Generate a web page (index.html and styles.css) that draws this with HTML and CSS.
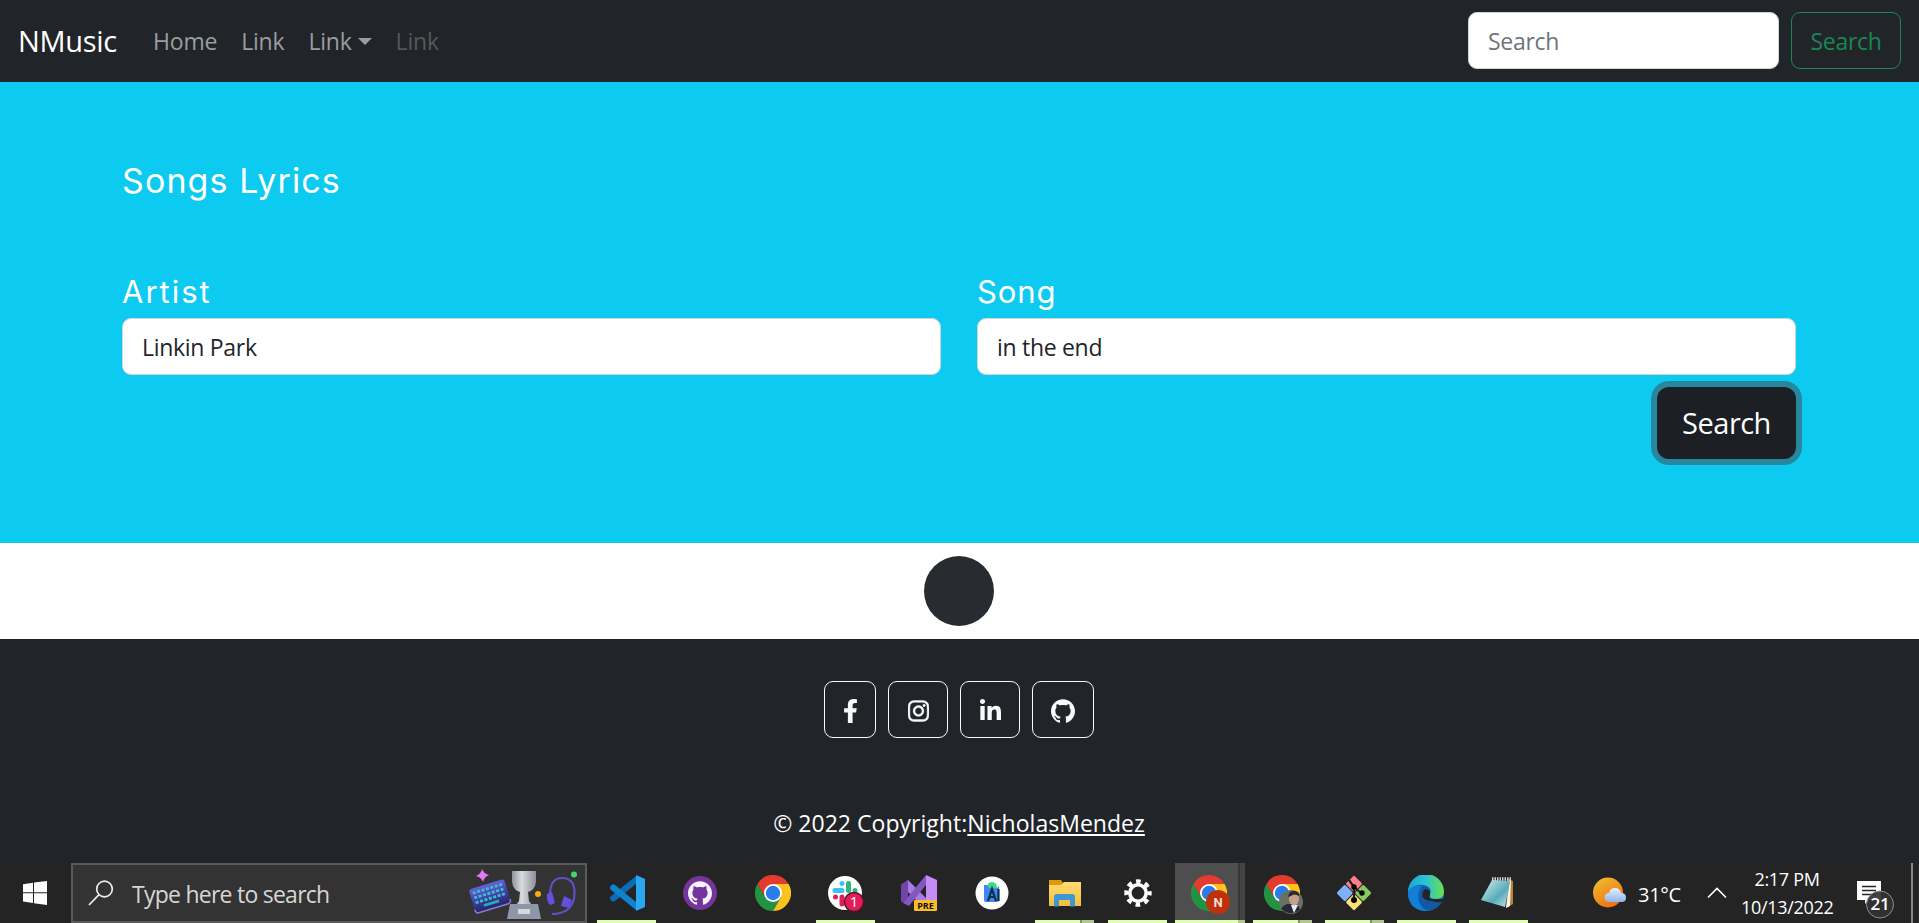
FILE: index.html
```html
<!DOCTYPE html>
<html lang="en">
<head>
<meta charset="utf-8">
<title>NMusic</title>
<link rel="stylesheet" href="styles.css">
</head>
<body>
<svg width="0" height="0" class="defs" aria-hidden="true">
  <defs>
    <symbol id="octocat" viewBox="0 0 24 24"><path d="M12 .297c-6.63 0-12 5.373-12 12 0 5.303 3.438 9.8 8.205 11.385.6.113.82-.258.82-.577 0-.285-.01-1.04-.015-2.04-3.338.724-4.042-1.61-4.042-1.61C4.422 18.07 3.633 17.7 3.633 17.7c-1.087-.744.084-.729.084-.729 1.205.084 1.838 1.236 1.838 1.236 1.07 1.835 2.809 1.305 3.495.998.108-.776.417-1.305.76-1.605-2.665-.3-5.466-1.332-5.466-5.93 0-1.31.465-2.38 1.235-3.22-.135-.303-.54-1.523.105-3.176 0 0 1.005-.322 3.3 1.23.96-.267 1.98-.399 3-.405 1.02.006 2.04.138 3 .405 2.28-1.552 3.285-1.23 3.285-1.23.645 1.653.24 2.873.12 3.176.765.84 1.23 1.91 1.23 3.22 0 4.61-2.805 5.625-5.475 5.92.42.36.81 1.096.81 2.22 0 1.606-.015 2.896-.015 3.286 0 .315.21.69.825.57C20.565 22.092 24 17.592 24 12.297c0-6.627-5.373-12-12-12"/></symbol>
    <symbol id="chrome" viewBox="0 0 36 36">
      <path d="M18 9h15.6A18 18 0 0 0 2.4 9l7.8 13.5z" fill="#e33b2e"/>
      <path d="M10.2 22.5 2.4 9A18 18 0 0 0 18 36l7.8-13.5z" fill="#229342"/>
      <path d="M25.8 22.5 18 36A18 18 0 0 0 33.6 9H18z" fill="#fcc31e"/>
      <circle cx="18" cy="18" r="9" fill="#fff"/><circle cx="18" cy="18" r="7.2" fill="#2a7de9"/>
    </symbol>
    <linearGradient id="sun" x1="0" y1="0" x2=".6" y2="1"><stop offset="0" stop-color="#ecc233"/><stop offset="1" stop-color="#f3710f"/></linearGradient>
    <linearGradient id="cloud" x1="0" y1="0" x2="0" y2="1"><stop offset="0" stop-color="#e6f0ff"/><stop offset="1" stop-color="#8fb4ee"/></linearGradient>
    <linearGradient id="cup"><stop offset="0" stop-color="#8f949b"/><stop offset=".4" stop-color="#d9dbde"/><stop offset="1" stop-color="#8b8f96"/></linearGradient>
    <linearGradient id="keys" x1="0" y1="0" x2="0" y2="1"><stop offset="0" stop-color="#6560d8"/><stop offset="1" stop-color="#27246e"/></linearGradient>
    <linearGradient id="edgeTop"><stop offset="0" stop-color="#1aa5dc"/><stop offset=".5" stop-color="#2cc4cf"/><stop offset="1" stop-color="#6bdf4e"/></linearGradient>
    <linearGradient id="pad" x1="0" y1="0" x2="1" y2="1"><stop offset="0" stop-color="#d6eef1"/><stop offset=".6" stop-color="#56acb9"/><stop offset="1" stop-color="#d4e9ec"/></linearGradient>
    <linearGradient id="folder" x1="0" y1="0" x2="0" y2="1"><stop offset="0" stop-color="#ffdc73"/><stop offset="1" stop-color="#f5bd3a"/></linearGradient>
  </defs>
</svg>

<nav class="navbar">
  <a class="brand">NMusic</a>
  <div class="nav-links">
    <a class="nav-link">Home</a>
    <a class="nav-link">Link</a>
    <a class="nav-link dropdown">Link</a>
    <a class="nav-link disabled">Link</a>
  </div>
  <form class="nav-search">
    <div class="control placeholder">Search</div>
    <div class="btn-outline-success">Search</div>
  </form>
</nav>

<main class="hero">
  <h1 class="title">Songs Lyrics</h1>
  <div class="fields">
    <div class="field"><h2 class="label wide">Artist</h2><div class="control">Linkin Park</div></div>
    <div class="field"><h2 class="label">Song</h2><div class="control">in the end</div></div>
  </div>
  <div class="actions"><div class="btn-dark">Search</div></div>
</main>

<section class="loading"><div class="spinner"></div></section>

<footer class="footer">
  <div class="social">
    <a class="social-btn fb"><svg viewBox="0 0 320 512" width="15" height="24"><path d="M279.14 288l14.22-92.66h-88.91v-60.13c0-25.35 12.42-50.06 52.24-50.06h40.42V6.26S260.43 0 225.36 0c-73.22 0-121.08 44.38-121.08 124.72v70.62H22.89V288h81.39v224h100.17V288z"/></svg></a>
    <a class="social-btn"><svg viewBox="0 0 448 512" width="21" height="24"><path stroke="#f8f9fa" stroke-width="10" d="M224.1 141c-63.6 0-114.9 51.3-114.9 114.9s51.3 114.9 114.9 114.9S339 319.5 339 255.9 287.7 141 224.1 141zm0 189.6c-41.1 0-74.7-33.5-74.7-74.7s33.5-74.7 74.7-74.7 74.7 33.5 74.7 74.7-33.6 74.7-74.7 74.7zm146.4-194.3c0 14.9-12 26.8-26.8 26.8-14.9 0-26.8-12-26.8-26.8s12-26.8 26.8-26.8 26.8 12 26.8 26.8zm76.1 27.2c-1.7-35.9-9.9-67.7-36.2-93.9-26.2-26.2-58-34.4-93.9-36.2-37-2.1-147.9-2.1-184.9 0-35.8 1.7-67.6 9.9-93.9 36.1s-34.4 58-36.2 93.9c-2.1 37-2.1 147.9 0 184.9 1.7 35.9 9.9 67.7 36.2 93.9s58 34.4 93.9 36.2c37 2.1 147.9 2.1 184.9 0 35.9-1.7 67.7-9.9 93.9-36.2 26.2-26.2 34.4-58 36.2-93.9 2.1-37 2.1-147.8 0-184.8zM398.8 388c-7.8 19.6-22.9 34.7-42.6 42.6-29.5 11.7-99.5 9-132.1 9s-102.7 2.6-132.1-9c-19.6-7.8-34.7-22.9-42.6-42.6-11.7-29.5-9-99.5-9-132.1s-2.6-102.7 9-132.1c7.8-19.6 22.9-34.7 42.6-42.6 29.5-11.7 99.5-9 132.1-9s102.7-2.6 132.1 9c19.6 7.8 34.7 22.9 42.6 42.6 11.7 29.5 9 99.5 9 132.1s2.7 102.7-9 132.1z"/></svg></a>
    <a class="social-btn"><svg viewBox="0 0 448 512" width="21" height="24"><path d="M100.28 448H7.4V148.9h92.88zM53.79 108.1C24.09 108.1 0 83.5 0 53.8a53.79 53.79 0 0 1 107.58 0c0 29.7-24.1 54.3-53.79 54.3zM447.9 448h-92.68V302.4c0-34.7-.7-79.2-48.29-79.2-48.29 0-55.69 37.7-55.69 76.7V448h-92.78V148.9h89.08v40.8h1.3c12.4-23.5 42.69-48.3 87.88-48.3 94 0 111.28 61.9 111.28 142.3V448z"/></svg></a>
    <a class="social-btn gh"><svg width="24" height="24"><use href="#octocat"/></svg></a>
  </div>
  <p class="copyright">© 2022 Copyright:<a class="author">NicholasMendez</a></p>
</footer>

<div class="taskbar">
  <div class="start"><svg width="24" height="24" viewBox="0 0 24 24" fill="#fff"><path d="M0 3.2 10 1.8V11.3H0zM11 1.6 24 0V11.3H11zM0 12.3H10V22L0 20.6zM11 12.3H24V24L11 22.2z"/></svg></div>
  <div class="task-search">
    <svg width="26" height="26" viewBox="0 0 26 26" fill="none" stroke="#eee" stroke-width="1.7"><circle cx="16.5" cy="9" r="7.8"/><path d="M11 14.7 1 25"/></svg>
    <span class="task-search-text">Type here to search</span>
    <svg class="art" width="110" height="54" viewBox="0 0 110 54">
      <path d="M15 3q2 5 7 6-5 2-6 7-2-5-7-6 5-2 6-7z" fill="#e07bf2"/>
      <g transform="rotate(-17 22 29)"><rect x="4" y="18" width="37" height="24" rx="3" fill="url(#keys)"/><path d="M4 39q0 4 3 4h31q3 0 3-4" fill="none" stroke="#8579d9" stroke-width="1.5"/>
      <path d="M7 22.500h31M7 27.500h31M7 32.500h31" stroke="#33c2d1" stroke-width="2.800" stroke-dasharray="3 1.600"/><path d="M14 37.500h16" stroke="#22adba" stroke-width="2.800"/></g>
      <path d="M45 5h24v11q-1 8-8 10l1 9 3 4H49l3-4 1-9q-7-2-8-10z" fill="url(#cup)"/><path d="M43 38h28l3 15H40z" fill="#8e97a7"/><rect x="51" y="43" width="12" height="5" fill="#d8d8db"/>
      <circle cx="71" cy="28" r="3" fill="#f8ab0b"/><circle cx="107" cy="8.500" r="3" fill="#45d56c"/>
      <path d="M83 29q0-17 12-17 15 0 12 21-4 15-22 15" fill="none" stroke="#5c51c6" stroke-width="2.200"/><path d="M80 28l5-2 3 11-4 2q-5-2-4-11zM97 30l8 4-3 8-8-2z" fill="#6250e0"/>
    </svg>
  </div>
  <div class="apps">
    <div class="app running"><svg width="36" height="36" viewBox="0 0 36 36"><path d="M1 24q2 4 5 2L27 9V1L1 22z" fill="#0a6cb4"/><path d="M1 12q2-4 5-2l21 17v8L1 14z" fill="#1183ce"/><path d="M27 0l9 4v28l-9 4z" fill="#2aa6f2"/></svg></div>
    <div class="app"><svg width="36" height="36" viewBox="0 0 36 36"><circle cx="18" cy="18" r="17" fill="#75349b"/><use href="#octocat" x="6" y="6" width="24" height="24" fill="#f6f2fb"/></svg></div>
    <div class="app"><svg width="36" height="36"><use href="#chrome"/></svg></div>
    <div class="app running"><svg width="38" height="38" viewBox="0 0 38 38"><circle cx="18" cy="18" r="17" fill="#fff"/><path d="M8 15.500h7M15 8.500h0" stroke="#36c5f0" stroke-width="5" stroke-linecap="round"/><path d="M21.500 8.500v7M28 15.500h0" stroke="#2eb67d" stroke-width="5" stroke-linecap="round"/><path d="M15 22v7M8.500 22h0" stroke="#e01e5a" stroke-width="5" stroke-linecap="round"/><circle cx="27" cy="27" r="9.500" fill="#e01e5a" stroke="#5d1029" stroke-width="1.500"/><text x="27" y="32" text-anchor="middle" class="badge-one">1</text></svg></div>
    <div class="app"><svg width="36" height="36" viewBox="0 0 36 36"><path d="M0 10l7-5 22 22-3 9z" fill="#a77be6"/><path d="M0 10l7-5v18l-5 5-2-2z" fill="#7144a8"/><path d="M2 28 25 0v10L8 31z" fill="#8257be"/><path d="M25 0l11 5v26H25z" fill="#c48df5"/><rect x="13" y="25" width="23" height="11" rx="1" fill="#fbbc2a"/><text x="24.500" y="33.500" text-anchor="middle" class="badge-pre">PRE</text></svg></div>
    <div class="app"><svg width="36" height="36" viewBox="0 0 36 36"><circle cx="18" cy="18" r="16.500" fill="#fff"/><path d="M13 13q0-6 5-6t5 6z" fill="#3ddc84"/><path d="M10 10h3l2 3h8l2-2v14q0 2-2 2H12q-2 0-2-2z" fill="#4285f4"/><path d="M14 26l4-12 4 12M15.500 22h5M24.500 14v12" fill="none" stroke="#073042" stroke-width="2.200"/></svg></div>
    <div class="app running stacked"><svg width="36" height="36" viewBox="0 0 36 36"><path d="M2 5h12l2 3v5H2z" fill="#e0980a"/><path d="M2 10h12l3-3h17v24H2z" fill="url(#folder)"/><path d="M7 31.500V22q0-3 3-3h15q3 0 3 3v9.500h-5V25H12v6.500z" fill="#3d97d5"/></svg></div>
    <div class="app running"><svg width="36" height="36" viewBox="0 0 36 36" fill="none" stroke="#fff"><circle cx="18" cy="18" r="8.200" stroke-width="3.600"/><circle cx="18" cy="18" r="11.500" stroke-width="4.400" stroke-dasharray="4.600 4.432" stroke-dashoffset="2.300"/></svg></div>
    <div class="app active"><svg width="40" height="40" viewBox="0 0 40 40"><use href="#chrome" width="36" height="36"/><circle cx="27" cy="27" r="12" fill="#be310c"/><text x="27" y="32" text-anchor="middle" class="badge-n">N</text></svg></div>
    <div class="app narrow running stacked"><svg class="profile" width="40" height="40" viewBox="0 0 40 40"><use href="#chrome" width="36" height="36"/><circle cx="27" cy="27" r="12" fill="#6a7160"/><path d="M17 34q3-5 8-5h6q4 1 5 6-9 7-19-1z" fill="#24283a"/><path d="M27 30l3 8 4-8z" fill="#e9edf2"/><ellipse cx="30" cy="24" rx="5" ry="6.500" fill="#c7a08d"/><path d="M24 22q1-7 7-6 5 1 4 5-5-3-8 0z" fill="#2f2724"/></svg></div>
    <div class="app narrow running stacked"><svg width="36" height="36" viewBox="0 0 36 36"><g transform="rotate(45 18 18)"><rect x="5.500" y="5.500" width="12" height="12" rx="1.500" fill="#fb7f84"/><rect x="18.500" y="5.500" width="12" height="12" rx="1.500" fill="#84cd5c"/><rect x="5.500" y="18.500" width="12" height="12" rx="1.500" fill="#7fb0fb"/><rect x="18.500" y="18.500" width="12" height="12" rx="1.500" fill="#fde077"/></g><path d="M13 5l5 7v13M18 12l7 6" stroke="#211f20" stroke-width="2.200" fill="none"/><circle cx="18" cy="12" r="2.700"/><circle cx="18" cy="25" r="3"/><circle cx="26" cy="18" r="2.700"/></svg></div>
    <div class="app narrow running"><svg width="36" height="36" viewBox="0 0 36 36"><circle cx="18" cy="18" r="18" fill="#0f6cbd"/><path d="M0 17A18 18 0 0 1 36 17q0 7-8 7-7 0-6-4 3-8-6-10Q6 8 0 17z" fill="url(#edgeTop)"/><path d="M0 17q5-8 14-6-5 4-4 12 1 9 9 13Q2 36 0 20z" fill="#127fd4"/><path d="M14 11q9 1 8 8-1 2 0 5 4 6 12 2-5 10-15 9-9-4-8-14 1-6 3-10z" fill="#1358a5"/><path d="M22 18q0 3-1 4 2 3 7 2h7.500l-2 3q-5 1-10-1-6 0-9-4-1-6 3-8 4 0 4.500 4z" fill="#252525"/></svg></div>
    <div class="app narrow running"><svg width="36" height="36" viewBox="0 0 36 36"><path d="M28 4l5 2v23l-7 4z" fill="#b9852e"/><path d="M30 4l1 1-1 26-4 2z" fill="#f3f3ee"/><path d="M12 5l18 1-5 26L1 25z" fill="url(#pad)"/><path d="M12 4h19" stroke="#cfd3d4" stroke-width="3.500" stroke-dasharray="1.500 1"/></svg></div>
  </div>
  <div class="tray">
    <div class="weather"><svg width="34" height="32" viewBox="0 0 34 32"><circle cx="15" cy="15.500" r="15" fill="url(#sun)"/><path d="M16 25a4.500 4.500 0 0 1 0-9q1-5 6-5 5 0 6 5 5 0 5 4.500T29 25z" fill="url(#cloud)"/></svg><span class="temp">31°C</span></div>
    <svg class="chevron" width="20" height="12" viewBox="0 0 20 12" fill="none" stroke="#fff" stroke-width="1.600"><path d="M1 10.500 10 1.500 19 10.500"/></svg>
    <div class="clock"><span class="time">2:17 PM</span><span class="date">10/13/2022</span></div>
    <svg class="notice" width="40" height="38" viewBox="0 0 40 38"><path d="M0 0h24v19H12l-4 4V19H0z" fill="#fff"/><path d="M5 5.500h14M5 9.500h14M5 13.500h14" stroke="#252525" stroke-width="1.400"/><circle cx="23" cy="23.500" r="13.500" fill="#333" fill-opacity=".92" stroke="#8f8f8f"/><text x="23" y="29" text-anchor="middle" class="badge-count">21</text></svg>
    <div class="show-desktop"></div>
  </div>
</div>
</body>
</html>
```
FILE: styles.css
```css
* { box-sizing: border-box; }
body {
  margin: 0;
  width: 1919px;
  height: 923px;
  overflow: hidden;
  background: #fff;
  color: #212529;
  font: 23px/36px "Open Sans", "Noto Sans", sans-serif;
  letter-spacing: -0.3px;
}
.defs { position: absolute; }
svg { display: block; flex: none; }
h1, h2, p { margin: 0; font-weight: 400; }

.navbar { display: flex; align-items: center; height: 82px; padding: 0 18px 1px; background: #212529; }
.brand { width: 123px; color: #fff; font-size: 29px; letter-spacing: -0.3px; }
.nav-links { display: flex; flex: 1; padding-top: 1px; }
.nav-link { padding: 0 12px; color: #9b9d9e; letter-spacing: -0.2px; }
.dropdown { display: flex; align-items: center; gap: 6px; }
.dropdown::after { content: ""; border: 7px solid transparent; border-top-color: #9b9d9e; border-bottom: 0; }
.disabled { color: #55585b; }
.nav-search { display: flex; gap: 12px; }
.nav-search .control { width: 311px; padding-top: 10px; }
.control {
  height: 57px;
  padding: 10px 19px;
  border: 1px solid #ced4da;
  border-radius: 9px;
  background: #fff;
}
.placeholder { color: #6c757d; }
.btn-outline-success { width: 110px; height: 57px; padding-top: 10px; border: 1px solid #198754; border-radius: 9px; color: #198754; text-align: center; }

.hero { height: 461px; padding: 72px 123px 0 122px; background: #0dcaf0; color: #fff; }
.title { height: 114px; font: 34px/54px Inter, sans-serif; letter-spacing: 1.1px; }
.label { height: 50px; font: 31px/48px Inter, sans-serif; letter-spacing: 0.9px; }
.wide { letter-spacing: 2px; }
.fields { display: grid; grid-template-columns: 1fr 1fr; gap: 36px; }
.hero .control { color: #212529; }
.actions { display: flex; justify-content: flex-end; padding-top: 12px; }
.btn-dark {
  width: 139px;
  height: 72px;
  border-radius: 12px;
  background: #1c1f23;
  box-shadow: 0 0 0 6px rgba(66, 70, 73, 0.5);
  font-size: 29px;
  line-height: 72px;
  letter-spacing: -0.5px;
  text-align: center;
}

.loading { display: flex; align-items: center; justify-content: center; height: 96px; padding-right: 1px; }
.spinner { width: 70px; height: 70px; border-radius: 50%; background: #282b30; }

.footer { height: 224px; padding: 42px 1px 0 0; background: #212529; color: #fff; }
.social { display: flex; justify-content: center; gap: 12px; }
.social-btn { display: flex; align-items: center; justify-content: center; width: 60px; height: 57px; padding-top: 3px; border: 1px solid #f8f9fa; border-radius: 9px; fill: #f8f9fa; }
.fb { width: 52px; }
.gh { width: 62px; }
.copyright { margin-top: 67px; text-align: center; letter-spacing: 0.03px; }
.author { text-decoration: underline; text-decoration-thickness: 2px; text-underline-offset: 2px; }

.taskbar { display: flex; height: 60px; background: #242424; color: #fff; }
.start { display: flex; align-items: center; justify-content: center; width: 71px; padding-right: 1px; }
.task-search { display: flex; align-items: center; width: 516px; border: 2px solid #5a5a5a; background: #333; padding-left: 15px; }
.task-search-text { width: 353px; padding: 1px 0 0 18px; color: #d6d6d6; letter-spacing: -0.75px; }
.apps { display: flex; padding-left: 3px; }
.app { display: flex; flex-direction: column; align-items: center; width: 73px; padding-top: 12px; position: relative; }
.narrow { width: 72px; }
.profile { margin-left: 4px; }
.running::after {
  content: "";
  position: absolute;
  left: 7px;
  bottom: 0;
  width: 59px;
  height: 3px;
  background: #dfffb0;
}
.stacked::after { background: linear-gradient(90deg, #dfffb0 45px, #80926a 45px 47px, #b0ca8c 47px); }
.active { width: 71px; margin-left: 1px; background: linear-gradient(90deg, #4e4e4e 63px, #363636 63px 65px, #444 65px 70px, #242424 70px); }
.active::after {
  content: "";
  position: absolute;
  left: 0;
  bottom: 0;
  width: 70px;
  height: 3px;
  background: linear-gradient(90deg, #dfffb0 63px, #b0ca8c 63px);
}
.badge-one { font: 15px "Open Sans", sans-serif; fill: #fff; }
.badge-pre { font: 700 9px "Open Sans", sans-serif; letter-spacing: 0; fill: #111; }
.badge-n { font: 700 13px Roboto, sans-serif; fill: #f6ddd6; }
.badge-count { font: 600 17px "Open Sans", sans-serif; fill: #fff; }

.tray { display: flex; flex: 1; padding-left: 59px; }
.weather { display: flex; align-items: center; width: 114px; gap: 11px; }
.temp { font-size: 20px; padding-top: 3px; }
.chevron { margin-top: 24px; }
.clock { display: flex; flex-direction: column; width: 92px; margin-left: 14px; padding-top: 2px; text-align: center; font-size: 18px; line-height: 28px; white-space: nowrap; }
.notice { margin: 18px 0 0 24px; }
.show-desktop { width: 2px; height: 60px; margin-left: 14px; background: #858585; }
```
